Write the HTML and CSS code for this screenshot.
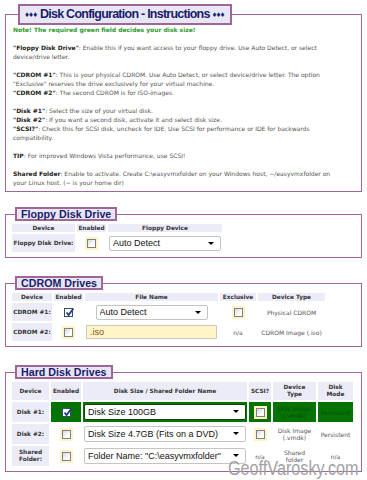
FILE: index.html
```html
<!DOCTYPE html>
<html lang="en">
<head>
  <meta charset="UTF-8">
  <title>Disk Configuration</title>
  <link rel="stylesheet" href="styles.css">
</head>
<body>
<div class="page">

  <fieldset class="intro">
    <legend class="big"><span class="dia">&diams;&diams;&diams;</span> Disk Configuration - Instructions <span class="dia">&diams;&diams;&diams;</span></legend>
    <p class="note">Note! The required green field decides your disk size!</p>
    <p><b>"Floppy Disk Drive"</b>: Enable this if you want access to your floppy drive. Use Auto Detect, or select<br>device/drive letter.</p>
    <p><b>"CDROM #1"</b>: This is your physical CDROM. Use Auto Detect, or select device/drive letter. The option<br>"Exclusive" reserves the drive exclusively for your virtual machine.<br><b>"CDROM #2"</b>: The second CDROM is for ISO-images.</p>
    <p><b>"Disk #1"</b>: Select the size of your virtual disk.<br><b>"Disk #2"</b>: If you want a second disk, activate it and select disk size.<br><b>"SCSI?"</b>: Check this for SCSI disk, uncheck for IDE. Use SCSI for performance or IDE for backwards<br>compatibility.</p>
    <p><b>TIP</b>: For improved Windows Vista performance, use SCSI!</p>
    <p><b>Shared Folder</b>: Enable to activate. Create C:\easyvmxfolder on your Windows host, ~/easyvmxfolder on<br>your Linux host. (~ is your home dir)</p>
  </fieldset>

  <fieldset>
    <legend>Floppy Disk Drive</legend>
    <table class="floppy">
      <tr>
        <th class="w63">Device</th>
        <th class="w29">Enabled</th>
        <th class="w114">Floppy Device</th>
      </tr>
      <tr>
        <td class="lbl">Floppy Disk Drive:</td>
        <td><span class="cb"><i></i></span></td>
        <td><span class="sel"><select><option>Auto Detect</option></select></span></td>
      </tr>
    </table>
  </fieldset>

  <fieldset>
    <legend>CDROM Drives</legend>
    <table class="cdrom">
      <tr>
        <th class="w40">Device</th>
        <th class="w29">Enabled</th>
        <th class="w133">File Name</th>
        <th class="w36">Exclusive</th>
        <th class="w67">Device Type</th>
      </tr>
      <tr>
        <td class="lbl">CDROM #1:</td>
        <td><span class="cb on"><i><svg width="9" height="9" viewBox="0 0 9 9"><path d="M1.5 4.5 L3.6 7 L8.5 0.5" fill="none" stroke="#1d3c8f" stroke-width="1.8"/></svg></i></span></td>
        <td><span class="sel"><select><option>Auto Detect</option></select></span></td>
        <td><span class="cb"><i></i></span></td>
        <td>Physical CDROM</td>
      </tr>
      <tr>
        <td class="lbl">CDROM #2:</td>
        <td><span class="cb"><i></i></span></td>
        <td><input class="iso" type="text" value=".iso"></td>
        <td>n/a</td>
        <td>CDROM Image (.iso)</td>
      </tr>
    </table>
  </fieldset>

  <fieldset>
    <legend>Hard Disk Drives</legend>
    <table class="hdd">
      <tr>
        <th class="w37">Device</th>
        <th class="w30">Enabled</th>
        <th class="w164">Disk Size / Shared Folder Name</th>
        <th class="w22">SCSI?</th>
        <th class="w43">Device<br>Type</th>
        <th class="w35">Disk<br>Mode</th>
      </tr>
      <tr>
        <td class="lbl">Disk #1:</td>
        <td class="g"><span class="cb on"><i><svg width="9" height="9" viewBox="0 0 9 9"><path d="M1.5 4.5 L3.6 7 L8.5 0.5" fill="none" stroke="#1d3c8f" stroke-width="1.8"/></svg></i></span></td>
        <td class="g"><span class="sel wide"><select><option>Disk Size 100GB</option></select></span></td>
        <td class="g"><span class="cb"><i></i></span></td>
        <td class="g">Disk Image<br>(.vmdk)</td>
        <td class="g">Persistent</td>
      </tr>
      <tr>
        <td class="lbl">Disk #2:</td>
        <td><span class="cb"><i></i></span></td>
        <td><span class="sel wide"><select><option>Disk Size 4.7GB (Fits on a DVD)</option></select></span></td>
        <td><span class="cb"><i></i></span></td>
        <td>Disk Image<br>(.vmdk)</td>
        <td>Persistent</td>
      </tr>
      <tr>
        <td class="lbl">Shared<br>Folder:</td>
        <td><span class="cb"><i></i></span></td>
        <td><span class="sel wide"><select><option>Folder Name: "C:\easyvmxfolder"</option></select></span></td>
        <td>n/a</td>
        <td>Shared<br>folder</td>
        <td>n/a</td>
      </tr>
    </table>
  </fieldset>

  <div class="mark">GeoffVarosky.com</div>
</div>
</body>
</html>
```

FILE: styles.css
```css
body {
  margin: 0;
  font-family: 'DejaVu Sans', Verdana, sans-serif;
  font-size: 6px;
  color: #555;
  background: #fff;
}

.page {
  position: relative;
  padding: 4px 5px 0;
}

fieldset {
  border: 1px solid #a0669a;
  margin: 0 0 18px;
  padding: 1px 4px 3px;
}

legend {
  margin-left: 5px;
  padding: 0 4px;
  background: #e6e6f4;
  border: 2px solid #a0669a;
  color: #1c1c6c;
  font: bold 10.7px/10px 'Liberation Sans', Arial, sans-serif;
}

legend.big {
  font: bold 12.5px/16px 'Liberation Sans', Arial, sans-serif;
  letter-spacing: -0.75px;
  padding: 0 5px;
}

.dia {
  font-size: 8px;
  letter-spacing: 0;
  vertical-align: 1px;
}

/* instructions */
.intro {
  padding: 0 7px 4px;
  margin-bottom: 15px;
}

.intro p {
  margin: 0 0 9px;
  line-height: 9px;
  white-space: nowrap;
}

.intro p:last-child {
  margin-bottom: 0;
}

.intro b {
  color: #222;
}

.intro .note {
  color: #2e9a2e;
  font-weight: bold;
}

/* tables */
table {
  border-spacing: 2px;
  table-layout: fixed;
}

.floppy { width: 214px; }
.cdrom { width: 317px; }
.hdd { width: 345px; }

.w22 { width: 22px; }
.w29 { width: 29px; }
.w30 { width: 30px; }
.w35 { width: 35px; }
.w36 { width: 36px; }
.w37 { width: 37px; }
.w40 { width: 40px; }
.w43 { width: 43px; }
.w63 { width: 63px; }
.w67 { width: 67px; }
.w114 { width: 114px; }
.w133 { width: 133px; }
.w164 { width: 164px; }

th {
  background: #ececf8;
  color: #333;
  font-weight: bold;
  font-size: 5.8px;
  height: 8px;
  line-height: 7px;
  padding: 0;
}

.hdd th {
  height: 18px;
}

td {
  padding: 0;
  height: 18px;
  line-height: 7px;
  text-align: center;
}

.hdd td {
  height: 20px;
}

td.lbl {
  background: #ececf8;
  color: #333;
  font-weight: bold;
  font-size: 5.8px;
}

td.g {
  background: #037403;
  color: #0b4a0b;
}

/* checkbox */
.cb {
  display: inline-block;
  padding: 2px;
  background: #fff3c4;
  vertical-align: middle;
}

.cb i {
  display: block;
  width: 7px;
  height: 7px;
  border: 1px solid #7b808a;
  background: linear-gradient(135deg, #d8d8d8, #fff 70%);
}

.cb.on {
  background: none;
}

.cb.on i {
  background: #fff;
  border-color: #3a4a6a;
}

.cb svg {
  display: block;
  margin: -1px 0 0 0;
}

/* select */
.sel {
  position: relative;
  display: inline-block;
  vertical-align: middle;
}

.sel::after {
  content: '';
  position: absolute;
  right: 7px;
  top: 6px;
  border-left: 3px solid transparent;
  border-right: 3px solid transparent;
  border-top: 3px solid #000;
}

.sel select {
  -webkit-appearance: none;
  appearance: none;
  display: block;
  width: 112px;
  height: 15px;
  margin: 0;
  padding: 0 3px;
  border: 1px solid #c4c4c4;
  border-radius: 2px;
  background: #fff;
  color: #111;
  font: 9px 'Liberation Sans', Arial, sans-serif;
}

.sel.wide select {
  width: 162px;
  height: 16px;
}

.g .sel select {
  border-color: #0a4a0a;
}

.iso {
  display: block;
  box-sizing: border-box;
  width: 131px;
  height: 14px;
  margin: 0 auto;
  padding: 0 3px;
  border: 1px solid #c8c8c8;
  background: #fff5c6;
  color: #8a4a1a;
  font: 9px 'Liberation Sans', Arial, sans-serif;
}

/* watermark */
.mark {
  position: absolute;
  left: 228px;
  top: 457px;
  font: 20px 'Liberation Sans', Arial, sans-serif;
  color: #8c8c8c;
  opacity: .8;
  text-shadow: 0 0 1px #fff;
  transform: scaleX(.81);
  transform-origin: left;
  white-space: nowrap;
}
```
